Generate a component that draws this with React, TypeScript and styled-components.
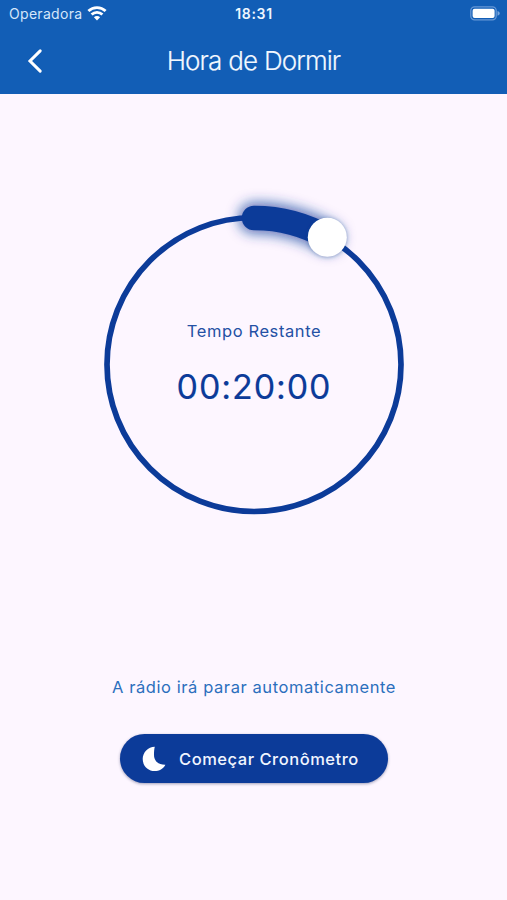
import React from "react";
import styled, { createGlobalStyle } from "styled-components";

const GlobalStyle = createGlobalStyle`
  * { box-sizing: border-box; }
  body { margin: 0; background: #fdf6ff; }
`;

const Screen = styled.div`
  display: flex;
  flex-direction: column;
  width: 507px;
  height: 900px;
  overflow: hidden;
  background: #fdf6ff;
  font-family: Inter, "Liberation Sans", sans-serif;
`;

const Header = styled.header`
  height: 94px;
  flex: none;
  background: #125eb6;
  color: #fff;
`;

const StatusBar = styled.div`
  display: grid;
  grid-template-columns: 1fr auto 1fr;
  align-items: center;
  height: 27px;
  padding: 0 6px 0 9px;
`;

const Carrier = styled.div`
  display: flex;
  align-items: center;
  gap: 5px;
  font-size: 14px;
  letter-spacing: 0.3px;
  color: #d5e6fa;
`;

const Clock = styled.div`
  margin-right: 2px;
  font-size: 14px;
  font-weight: 600;
  letter-spacing: 0.7px;
  color: #eef6ff;
`;

const BatterySlot = styled.div`
  display: flex;
  justify-content: flex-end;
`;

const NavBar = styled.div`
  display: grid;
  grid-template-columns: 70px 1fr 70px;
  align-items: center;
  height: 65px;
`;

const BackButton = styled.button`
  display: flex;
  justify-content: center;
  padding: 0;
  border: 0;
  background: none;
  color: #fff;
`;

const Title = styled.h1`
  margin: 0;
  padding-top: 1px;
  text-align: center;
  font-size: 26px;
  line-height: 66px;
  font-weight: 300;
  letter-spacing: -0.95px;
  word-spacing: 0.6px;
  color: #f2f8ff;
  -webkit-text-stroke: 0.15px #f2f8ff;
`;

const Content = styled.main`
  display: flex;
  flex-direction: column;
  align-items: center;
  flex: 1;
  padding: 90px 0 0 1px;
`;

const Dial = styled.div`
  display: grid;
  place-items: center;
  width: 360px;
  height: 360px;

  > * { grid-area: 1 / 1; }
`;

const Readout = styled.div`
  display: flex;
  flex-direction: column;
  align-items: center;
  gap: 17px;
  padding-top: 4px;
`;

const Label = styled.div`
  font-size: 16.5px;
  line-height: 24px;
  letter-spacing: 0.6px;
  color: #2450a4;
`;

const Time = styled.div`
  font-size: 34px;
  line-height: 54px;
  letter-spacing: 0.9px;
  color: #0c3b99;
  -webkit-text-stroke: 0.15px #0c3b99;
`;

const Hint = styled.p`
  margin: 131px 0 0;
  font-size: 16.5px;
  line-height: 24px;
  letter-spacing: 0.58px;
  color: #2b6fbd;
`;

const StartButton = styled.button`
  display: flex;
  align-items: center;
  gap: 13px;
  width: 268px;
  height: 49px;
  margin-top: 35px;
  padding: 0 0 0 22px;
  border: 0;
  border-radius: 25px;
  background: #0c3b99;
  box-shadow: 0 1px 3px rgba(20, 30, 80, 0.4);
  color: #f0f5ff;
  font: 500 16.5px/24px Inter, "Liberation Sans", sans-serif;
  letter-spacing: 0.53px;
  white-space: nowrap;
`;

function WifiIcon() {
  return (
    <svg width="20" height="15" viewBox="0 0 20 15" fill="none" stroke="#fff" strokeWidth="2.8">
      <path d="M1.4 5.1a12.4 12.4 0 0 1 17.2 0" />
      <path d="M4.6 8.6a7.8 7.8 0 0 1 10.8 0" />
      <path d="M10 14.4 6.9 11.3a4.3 4.3 0 0 1 6.2 0Z" fill="#fff" stroke="none" />
    </svg>
  );
}

function BatteryIcon() {
  return (
    <svg width="31" height="15" viewBox="0 0 31 15">
      <rect x="0.8" y="0.8" width="25.4" height="13" rx="3.8" fill="none" stroke="#6798d6" strokeWidth="1.3" />
      <rect x="2.6" y="2.7" width="22" height="9.2" rx="2" fill="#fff" />
      <path d="M27.5 4.9c3 .9 3 3.9 0 4.8Z" fill="#79a5dc" />
    </svg>
  );
}

function BackIcon() {
  return (
    <svg width="18" height="26" viewBox="0 0 18 26" fill="none">
      <path d="M14.2 2.9 4 13l10.2 10.1" stroke="currentColor" strokeWidth="3" strokeLinecap="round" />
    </svg>
  );
}

function MoonIcon() {
  return (
    <svg width="24" height="26" viewBox="0 0 24 26">
      <path d="M12.8.8C6 1.100.700 6.500.700 13.100c0 6.700 5.200 12 11.900 12 4.600 0 8.800-2.200 10.800-6.300C16.500 19 12 15 12 8.700c0-2.900.200-5.700.800-7.900Z" fill="#fff" />
    </svg>
  );
}

function DialRing() {
  const arc = "M180 34A146.500 146.500 0 0 1 253.500 53.500";
  return (
    <svg width="360" height="360" viewBox="0 0 360 360" fill="none">
      <defs>
        <filter id="arc-glow" x="140" y="-10" width="160" height="110" filterUnits="userSpaceOnUse">
          <feGaussianBlur stdDeviation="6.500" />
        </filter>
        <filter id="knob-shadow" x="220" y="20" width="70" height="70" filterUnits="userSpaceOnUse">
          <feGaussianBlur stdDeviation="2" />
        </filter>
      </defs>
      <circle cx="180" cy="180.500" r="147" stroke="#0c3b99" strokeWidth="5.700" />
      <path d={arc} stroke="#0c3b99" strokeOpacity="0.750" strokeWidth="30" strokeLinecap="round" filter="url(#arc-glow)" />
      <path d={arc} stroke="#0c3b99" strokeWidth="24.500" strokeLinecap="round" />
      <circle cx="253.300" cy="53.800" r="19.500" fill="#203f80" fillOpacity="0.350" filter="url(#knob-shadow)" />
      <circle cx="253.300" cy="53.300" r="19.500" fill="#fff" />
    </svg>
  );
}

export default function App() {
  return (
    <Screen>
      <GlobalStyle />
      <Header>
        <StatusBar>
          <Carrier>
            <span>Operadora</span>
            <WifiIcon />
          </Carrier>
          <Clock>18:31</Clock>
          <BatterySlot>
            <BatteryIcon />
          </BatterySlot>
        </StatusBar>
        <NavBar>
          <BackButton aria-label="Voltar">
            <BackIcon />
          </BackButton>
          <Title>Hora de Dormir</Title>
        </NavBar>
      </Header>
      <Content>
        <Dial>
          <DialRing />
          <Readout>
            <Label>Tempo Restante</Label>
            <Time>00:20:00</Time>
          </Readout>
        </Dial>
        <Hint>A rádio irá parar automaticamente</Hint>
        <StartButton>
          <MoonIcon />
          Começar Cronômetro
        </StartButton>
      </Content>
    </Screen>
  );
}
